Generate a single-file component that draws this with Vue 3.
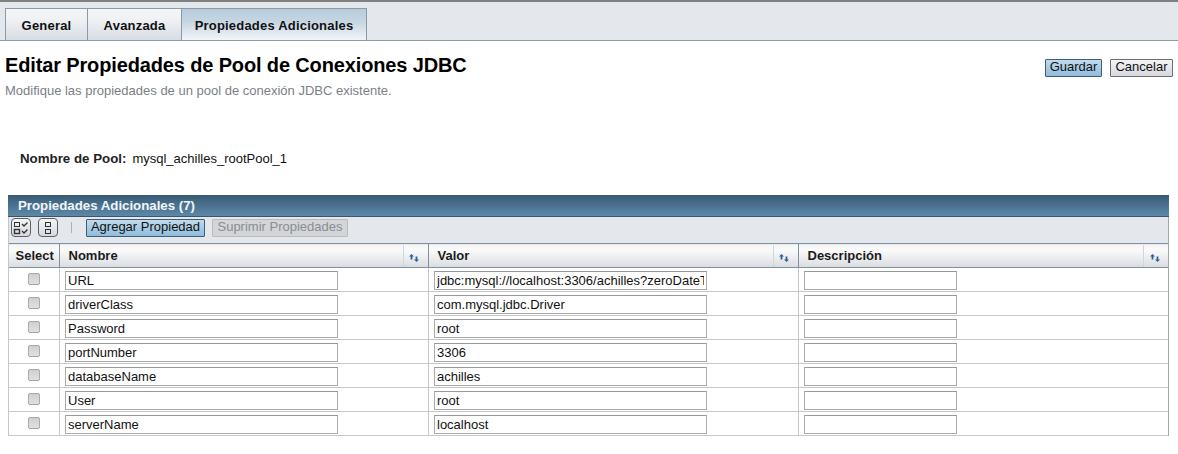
<script setup>
const rows = [
  { name: 'URL', value: 'jdbc:mysql://localhost:3306/achilles?zeroDateTimeBehavior=convertToNull' },
  { name: 'driverClass', value: 'com.mysql.jdbc.Driver' },
  { name: 'Password', value: 'root' },
  { name: 'portNumber', value: '3306' },
  { name: 'databaseName', value: 'achilles' },
  { name: 'User', value: 'root' },
  { name: 'serverName', value: 'localhost' },
]
const columns = ['Nombre', 'Valor', 'Descripción']
</script>

<template>
  <div class="page">
    <nav class="tabs">
      <a class="tab tab-general">General</a>
      <a class="tab tab-avanzada">Avanzada</a>
      <a class="tab tab-props active">Propiedades Adicionales</a>
    </nav>

    <header class="head">
      <div>
        <h1 class="title">Editar Propiedades de Pool de Conexiones JDBC</h1>
        <p class="sub">Modifique las propiedades de un pool de conexión JDBC existente.</p>
      </div>
      <div class="actions">
        <button class="btn primary guardar">Guardar</button>
        <button class="btn cancelar">Cancelar</button>
      </div>
    </header>

    <div class="pool">
      <span class="pool-label">Nombre de Pool:</span>
      <span class="pool-value">mysql_achilles_rootPool_1</span>
    </div>

    <section class="panel">
      <div class="panel-title">Propiedades Adicionales (7)</div>
      <div class="toolbar">
        <button class="icon-btn">
          <svg width="16" height="14" viewBox="0 0 16 14" fill="none" stroke="#333" stroke-width="1">
            <rect x="1.5" y="1.5" width="5" height="4" />
            <rect x="1.5" y="8.5" width="5" height="4" stroke-width="1.4" />
            <path d="M9 3l2 2 3.5-3.5M9 10l2 2 3.5-3.5" stroke-width="1.3" />
          </svg>
        </button>
        <button class="icon-btn small">
          <svg width="8" height="12" viewBox="0 0 8 12" fill="none" stroke="#333" stroke-width="1">
            <rect x="1.5" y="0.5" width="5" height="4" />
            <rect x="1.5" y="7.5" width="5" height="4" />
          </svg>
        </button>
        <span class="sep"></span>
        <button class="btn primary add">Agregar Propiedad</button>
        <button class="btn disabled">Suprimir Propiedades</button>
      </div>

      <table class="grid">
        <colgroup>
          <col class="c-sel" />
          <col class="c-name" />
          <col class="c-val" />
          <col />
        </colgroup>
        <thead>
          <tr>
            <th class="th-sel">Select</th>
            <th v-for="c in columns" :key="c">
              <div class="th-in">
                <span class="th-label">{{ c }}</span>
                <span class="sort">
                  <svg width="10" height="8" viewBox="0 0 10 8" fill="#2f5f9e">
                    <path d="M2.5 0L5 2.5H3.4V5.5H1.6V2.5H0z" />
                    <path d="M6.6 2.5h1.8v3H10L7.5 8 5 5.5h1.6z" />
                  </svg>
                </span>
              </div>
            </th>
          </tr>
        </thead>
        <tbody>
          <tr v-for="r in rows" :key="r.name">
            <td class="td-sel"><span class="check"></span></td>
            <td><input class="field name" :value="r.name" /></td>
            <td><input class="field name" :value="r.value" /></td>
            <td><input class="field desc" value="" /></td>
          </tr>
        </tbody>
      </table>
    </section>
  </div>
</template>

<style>
html, body { background: #fff; }
</style>

<style scoped>
.page {
  width: 1178px;
  height: 454px;
  overflow: hidden;
  font-family: 'Liberation Sans', Arial, sans-serif;
  font-size: 13px;
  color: #000;
  background: #fff;
}

.tabs {
  display: flex;
  align-items: flex-end;
  height: 38px;
  padding-left: 5px;
  background: #e4e7eb;
  border-top: 2px solid #808080;
  border-bottom: 1px solid #8a9ba6;
}
.tab {
  height: 32px;
  box-sizing: border-box;
  display: flex;
  align-items: center;
  justify-content: center;
  padding-top: 1px;
  font-size: 13px;
  font-weight: 700;
  letter-spacing: 0.2px;
  color: #111;
  background: linear-gradient(#f4f5f7, #f1f2f4 30%, #d7dde4);
  border: 1px solid #8a9ba6;
  border-bottom: none;
  margin-left: -1px;
}
.tab-general { width: 83px; margin-left: 0; }
.tab-avanzada { width: 95px; }
.tab-props { width: 186px; }
.tab.active { background: linear-gradient(#b8cbdc, #c5d5e2 40%, #f2f5f8); }

.head {
  display: flex;
  justify-content: space-between;
  padding: 0 5px;
  height: 74px;
}
.title {
  margin: 13px 0 0;
  font-size: 20px;
  line-height: 23px;
  font-weight: 700;
  letter-spacing: -0.14px;
  color: #000;
}
.sub {
  margin: 7px 0 0;
  font-size: 13px;
  line-height: 14px;
  color: #7b8087;
}
.actions {
  display: flex;
  gap: 8px;
  padding-top: 18px;
  align-items: flex-start;
}

.btn {
  height: 18px;
  padding: 0 0 2px;
  font-family: inherit;
  font-size: 13px;
  line-height: 14px;
  color: #111;
  background: linear-gradient(#f4f4f6, #d6d8de);
  border: 1px solid #6b6f74;
  border-radius: 1px;
}
.btn.primary {
  background: linear-gradient(#c2daec, #8fbcdc);
  border-color: #3f5f78;
}
.guardar { width: 57px; }
.cancelar { width: 63px; }

.pool {
  display: flex;
  align-items: baseline;
  gap: 6px;
  margin: 36px 0 0 20px;
  height: 15px;
  line-height: 15px;
}
.pool-label { font-weight: 700; font-size: 13.3px; color: #222; }
.pool-value { color: #111; }

.panel {
  margin: 29px 9px 0 8px;
  border-right: 1px solid #a4a8ac;
  border-left: 1px solid #c4c7ca;
}
.panel-title {
  height: 22px;
  margin: 0 -1px;
  padding-left: 10px;
  box-sizing: border-box;
  line-height: 22px;
  font-weight: 700;
  font-size: 13.25px;
  color: #f2f5f8;
  background: linear-gradient(#375a72, #48708e 45%, #5d88a8);
  border-bottom: 1px solid #3d5566;
}
.toolbar {
  display: flex;
  align-items: center;
  height: 26px;
  box-sizing: border-box;
  padding: 0 0 5px 2px;
  background: #e4e7eb;
}
.icon-btn {
  display: flex;
  align-items: center;
  justify-content: center;
  width: 20px;
  height: 19px;
  padding: 0;
  background: linear-gradient(#f4f5f6, #d6d9dd);
  border: 1px solid #5c6066;
  border-radius: 4px;
}
.icon-btn.small { margin-left: 7px; }
.sep {
  width: 1px;
  height: 11px;
  margin: 0 14px 0 13px;
  background: #aeb2b6;
}
.add { width: 119px; }
.disabled {
  width: 136px;
  margin-left: 7px;
  color: #8a8d91;
  background: #d3d5d8;
  border-color: #b8babd;
}

.grid {
  width: 100%;
  table-layout: fixed;
  border-collapse: collapse;
  background: #fff;
}
.c-sel { width: 50px; }
.c-name { width: 369px; }
.c-val { width: 370px; }

th {
  height: 24px;
  padding: 0;
  box-sizing: border-box;
  text-align: left;
  font-size: 13px;
  font-weight: 700;
  color: #1c1c1c;
  background: linear-gradient(#f6f6f7, #fafafa 25%, #d9dce0);
  border-top: 1px solid #7f929e;
  border-bottom: 1px solid #7f929e;
  border-left: 1px solid #7f929e;
}
th:first-child { border-left: none; }
.th-sel { text-align: center; padding-left: 2px; }
.th-in {
  display: flex;
  align-items: center;
  height: 22px;
}
.th-label {
  flex: 1;
  padding-left: 9px;
}
.sort {
  display: flex;
  align-items: center;
  justify-content: center;
  width: 25px;
  height: 22px;
  box-sizing: border-box;
  padding: 4px 3px 0 0;
  border-left: 1px solid #d3d6da;
}

td {
  height: 24px;
  padding: 1px 0 0 5px;
  box-sizing: border-box;
  border-bottom: 1px solid #c6c8ca;
  border-left: 1px solid #c6c8ca;
}
td:first-child { border-left: none; }
.td-sel { padding: 0; text-align: center; }
.check {
  display: block;
  width: 12px;
  height: 12px;
  margin: 0 auto 2px 19px;
  box-sizing: border-box;
  background: linear-gradient(#cfd0d2, #dedfe0);
  border: 1px solid #a6a8aa;
  border-radius: 2px;
}
.field {
  display: block;
  height: 19px;
  box-sizing: border-box;
  padding: 1px 2px 1px 2.5px;
  font-family: inherit;
  font-size: 13px;
  color: #111;
  background: #fff;
  border: 1px solid #a9abad;
  border-top-color: #999;
  outline: none;
}
.field.name { width: 273px; }
.field.desc { width: 153px; }
</style>
